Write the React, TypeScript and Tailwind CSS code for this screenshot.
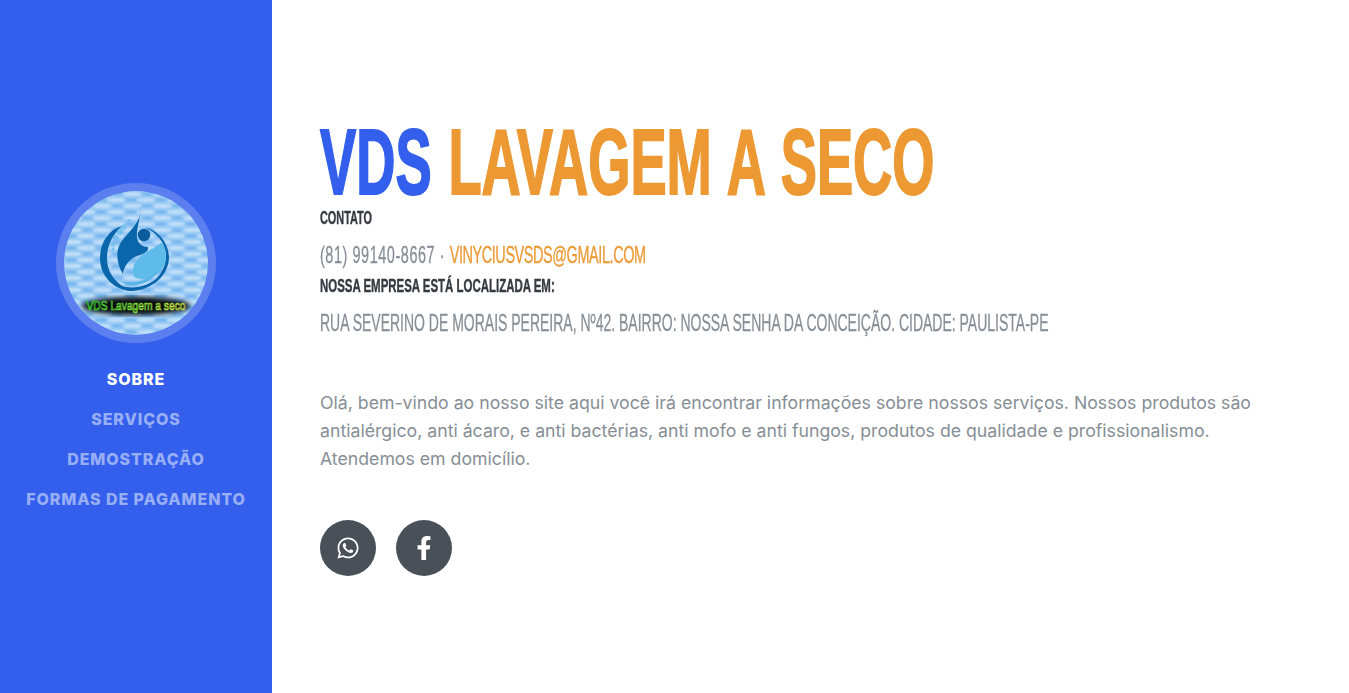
import { FaWhatsapp, FaFacebookF } from "react-icons/fa"

const navItems = ["Sobre", "Serviços", "Demostração", "Formas de Pagamento"]

function Logo() {
  return (
    <svg viewBox="0 0 144 144" className="w-full h-full rounded-full">
      <defs>
        <pattern id="water" width="30" height="12" patternUnits="userSpaceOnUse">
          <rect width="30" height="12" fill="#98c9f4" />
          <ellipse cx="8" cy="3" rx="10" ry="1.7" fill="#c6e2f9" />
          <ellipse cx="23" cy="9" rx="10" ry="1.7" fill="#c6e2f9" />
          <ellipse cx="23" cy="3" rx="6" ry="1.4" fill="#6fb2ee" />
          <ellipse cx="7" cy="9" rx="6" ry="1.4" fill="#6ab0ed" />
        </pattern>
        <filter id="soft">
          <feGaussianBlur stdDeviation="1" />
        </filter>
        <filter id="blur">
          <feGaussianBlur stdDeviation="2.5" />
        </filter>
        <linearGradient id="caption" x1="0" x2="1" y1="0" y2="0">
          <stop offset="0" stopColor="#35e835" />
          <stop offset="1" stopColor="#e6f04e" />
        </linearGradient>
      </defs>
      <rect x="-4" y="-4" width="152" height="152" fill="url(#water)" filter="url(#soft)" />
      {/* ring */}
      <path d="M58 35C44 39 36 52 36 67C36 86 51 101 72 100C55 97 43 84 43 67C43 54 49 43 58 35Z" fill="#0a66ab" />
      <path d="M81 36C94 39 105 52 105 67C104 83 92 94 80 97C92 91 101 80 102 67C103 53 93 42 81 36Z" fill="#0a66ab" />
      <path d="M48 90C58 99 82 100 96 84C88 101 60 106 48 90Z" fill="#0a66ab" />
      {/* drop */}
      <path d="M77 14C78 28 70 36 60 47C54 54 52 62 54 70C55 76 57 80 59 83C60 75 65 68 73 65C80 63 85 60 84 56C79 56 74 53 73 47C72 38 77 26 77 14Z" fill="#0a66ab" />
      <circle cx="80" cy="44" r="6.2" fill="#0a5c9c" />
      {/* leaf */}
      <path d="M98 51C103 60 104 72 96 80C90 87 80 89 72 87C68 85 68 78 71 72C75 65 84 60 90 57C93 55 96 53 98 51Z" fill="#5fbbea" />
      <path d="M56 90C66 93 84 92 94 78C90 92 68 99 56 90Z" fill="#55b5e8" />
      {/* dots */}
      <circle cx="69" cy="22" r="1.4" fill="#78c0ee" />
      <circle cx="65" cy="30" r="2" fill="#78c0ee" />
      <circle cx="60" cy="36" r="2.6" fill="#78c0ee" />
      <circle cx="56" cy="41" r="3" fill="#78c0ee" />
      <circle cx="52" cy="47" r="3" fill="#78c0ee" />
      <circle cx="49" cy="53" r="2.4" fill="#78c0ee" />
      <circle cx="49" cy="58" r="1.7" fill="#78c0ee" />
      {/* caption */}
      <ellipse cx="72" cy="115" rx="54" ry="9" fill="#050505" opacity="0.95" filter="url(#blur)" />
      <text x="72" y="119" textAnchor="middle" fontFamily="'Liberation Sans Narrow', 'Liberation Sans', sans-serif" fontSize="13.5" fill="#10180a" stroke="url(#caption)" strokeWidth="0.7" textLength="99" lengthAdjust="spacingAndGlyphs">
        VDS Lavagem a seco
      </text>
    </svg>
  )
}

export default function App() {
  return (
    <div className="flex min-h-screen bg-white text-[#868e96] font-['Inter',sans-serif]">
      {/* Sidebar */}
      <aside className="w-[272px] shrink-0 h-screen bg-[#335fec] flex flex-col items-center justify-center pt-[9px]">
        <div className="w-40 h-40 rounded-full border-8 border-white/20 mb-[16px]">
          <Logo />
        </div>
        <ul className="w-full">
          {navItems.map((item, index) => (
            <li key={item} className="h-10 flex items-center justify-center">
              <a
                href="#"
                className={`text-[16px] font-extrabold uppercase tracking-[0.9px] whitespace-nowrap ${
                  index === 0 ? "text-white" : "text-white/50"
                }`}
              >
                {item}
              </a>
            </li>
          ))}
        </ul>
      </aside>

      {/* Main content */}
      <main className="flex-1 min-w-0 h-screen px-12 flex flex-col justify-center pt-[3px]">
        <h1 className="text-[92px] leading-[84px] font-bold uppercase whitespace-nowrap origin-left scale-x-[0.59] [word-spacing:3px] [-webkit-text-stroke:2px_currentColor] text-[#ec9933] font-['Liberation_Sans_Narrow','Liberation_Sans',sans-serif]">
          <span className="text-[#335fec]">VDS</span> Lavagem a seco
        </h1>
        <div className="font-['Liberation_Sans_Narrow','Liberation_Sans',sans-serif] uppercase">
          <h3 className="text-[18px] leading-[22px] font-bold text-[#343a40] whitespace-nowrap origin-left scale-x-[0.605] [-webkit-text-stroke:0.4px_currentColor] mt-[3px]">Contato</h3>
          <p className="text-[24px] leading-[32px] whitespace-nowrap origin-left scale-x-[0.603] [-webkit-text-stroke:0.3px_currentColor] mt-[10px]">
            <span className="tracking-[0.9px]">(81) 99140-8667 · </span>
            <a href="#" className="text-[#ec9933] tracking-[-0.7px]">vinyciusvsds@gmail.com</a>
          </p>
          <h3 className="text-[18px] leading-[22px] font-bold text-[#343a40] whitespace-nowrap origin-left scale-x-[0.636] [-webkit-text-stroke:0.4px_currentColor] mt-[4px]">Nossa empresa está localizada em:</h3>
          <p className="text-[24px] leading-[32px] whitespace-nowrap origin-left scale-x-[0.583] [-webkit-text-stroke:0.3px_currentColor] mt-[10px]">
            Rua Severino de Morais Pereira, Nº42. Bairro: Nossa Senha da Conceição. Cidade: Paulista-PE
          </p>
        </div>
        <p className="text-[17.7px] leading-[28px] mt-[50px]">
          Olá, bem-vindo ao nosso site aqui você irá encontrar informações sobre nossos serviços. Nossos produtos são antialérgico, anti ácaro, e anti bactérias, anti mofo e anti fungos, produtos de qualidade e profissionalismo. Atendemos em domicílio.
        </p>
        <div className="flex gap-5 mt-[47px]">
          <a href="#" className="w-14 h-14 rounded-full bg-[#495057] text-white flex items-center justify-center">
            <FaWhatsapp className="w-6 h-6" />
          </a>
          <a href="#" className="w-14 h-14 rounded-full bg-[#495057] text-white flex items-center justify-center">
            <FaFacebookF className="w-6 h-6" />
          </a>
        </div>
      </main>
    </div>
  )
}
